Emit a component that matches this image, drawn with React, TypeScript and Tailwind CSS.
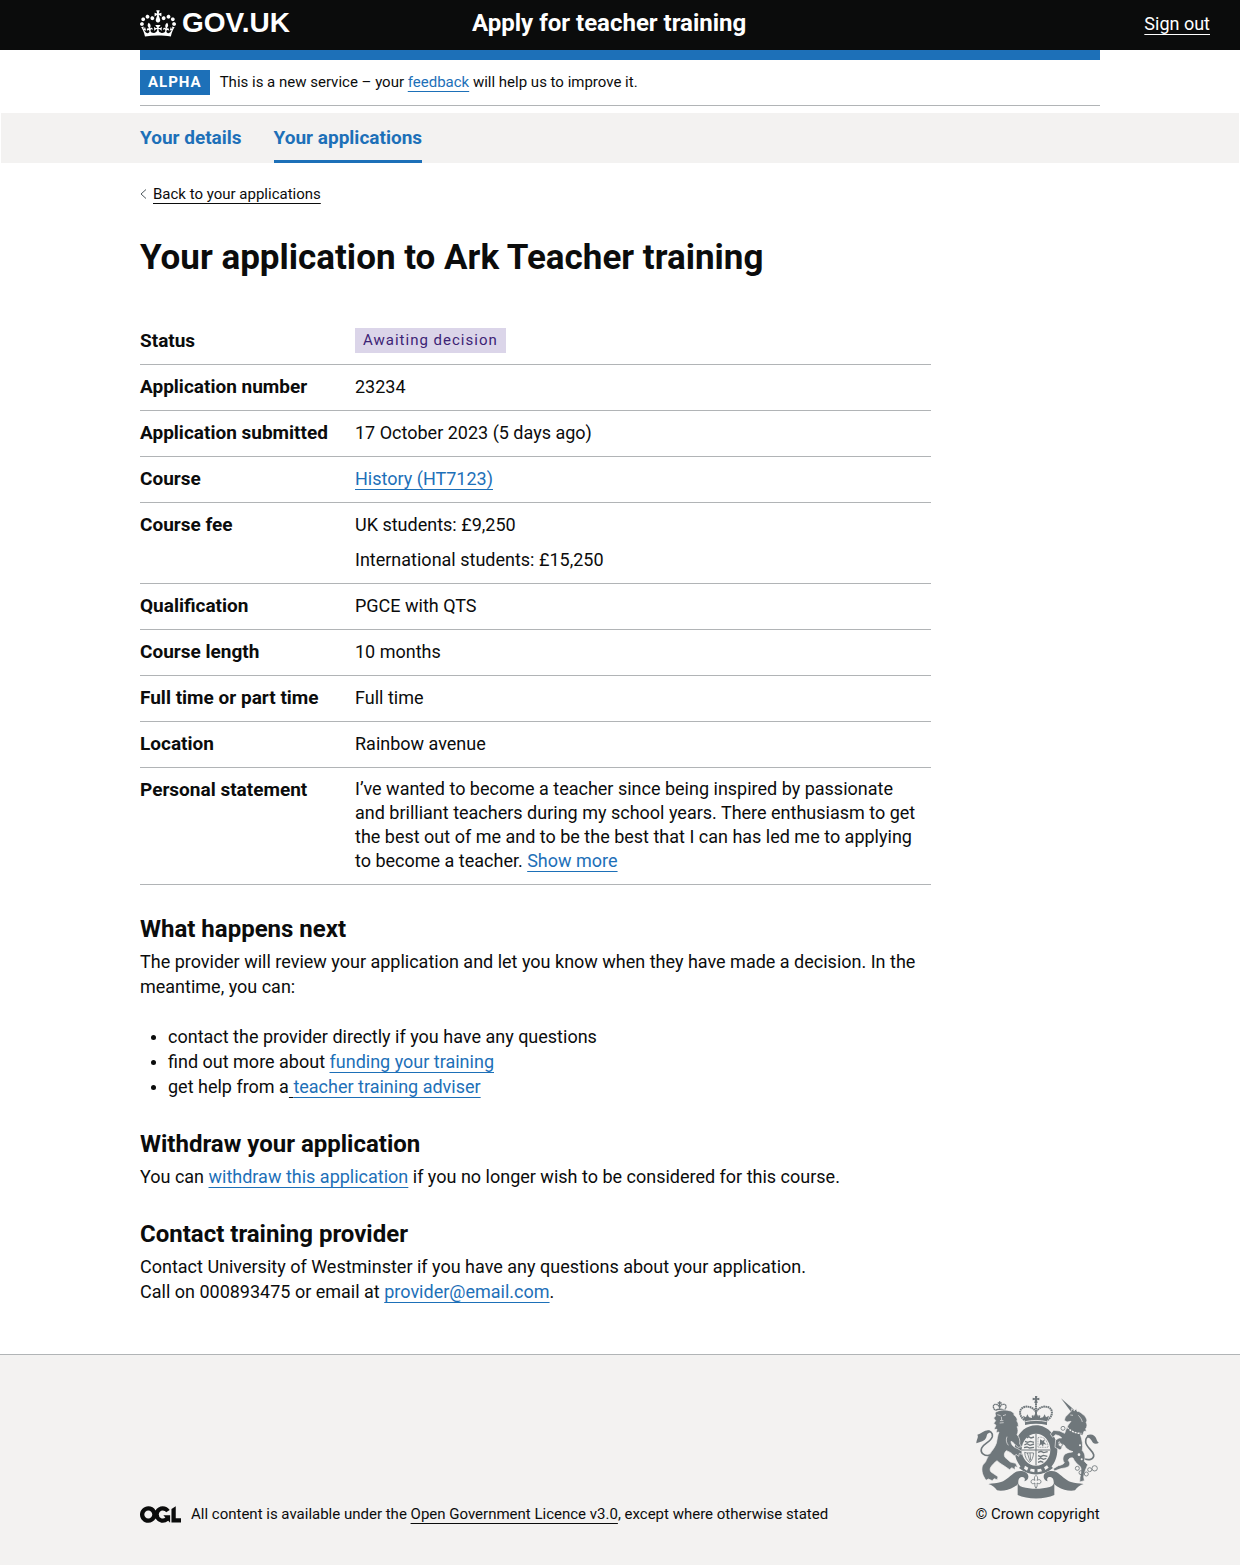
import type { ReactNode } from 'react';

function Crown() {
  return (
    <svg viewBox="0 0 132 97" className="h-[27px] w-9 shrink-0" fill="currentColor" fillRule="evenodd" aria-hidden="true">
      <path d="M25 30.2c3.5 1.5 7.7-.2 9.1-3.7 1.5-3.6-.2-7.8-3.9-9.2-3.6-1.4-7.6.3-9.1 3.9-1.4 3.5.3 7.5 3.9 9zM9 39.5c3.6 1.5 7.8-.2 9.2-3.7 1.5-3.6-.2-7.8-3.9-9.1-3.6-1.5-7.6.2-9.1 3.8-1.4 3.5.3 7.5 3.8 9zM4.4 57.2c3.5 1.5 7.7-.2 9.1-3.8 1.5-3.6-.2-7.7-3.9-9.1-3.5-1.5-7.6.3-9.1 3.8-1.4 3.5.3 7.6 3.9 9.1zm38.3-21.4c3.5 1.5 7.7-.2 9.1-3.8 1.5-3.6-.2-7.7-3.9-9.1-3.6-1.5-7.6.3-9.1 3.8-1.3 3.6.4 7.7 3.9 9.1zm64.4-5.6c-3.6 1.5-7.8-.2-9.1-3.7-1.5-3.6.2-7.8 3.8-9.2 3.6-1.4 7.7.3 9.2 3.9 1.3 3.5-.4 7.5-3.9 9zm15.9 9.3c-3.6 1.5-7.7-.2-9.1-3.7-1.5-3.6.2-7.8 3.7-9.1 3.6-1.5 7.7.2 9.2 3.8 1.5 3.5-.3 7.5-3.8 9zm4.7 17.7c-3.6 1.5-7.8-.2-9.2-3.8-1.5-3.6.2-7.7 3.9-9.1 3.6-1.5 7.7.3 9.2 3.8 1.3 3.5-.4 7.6-3.9 9.1zM89.3 35.8c-3.6 1.5-7.8-.2-9.2-3.8-1.4-3.6.2-7.7 3.9-9.1 3.6-1.5 7.7.3 9.2 3.8 1.4 3.6-.3 7.7-3.9 9.1zM69.7 17.7l8.9 4.7V9.3l-8.9 2.8c-.2-.3-.5-.6-.9-.9L72.4 0H59.6l3.5 11.2c-.3.3-.6.5-.9.9l-8.8-2.8v13.1l8.8-4.7c.3.3.6.7.9.9l-5 15.4v.1c-.2.8-.4 1.6-.4 2.4 0 4.1 3.1 7.5 7 8.1h.2c.3 0 .7.1 1 .1.4 0 .7 0 1-.1h.2c4-.6 7.1-4.1 7.1-8.1 0-.8-.1-1.7-.4-2.4V34l-5.1-15.4c.4-.2.7-.6 1-.9zM66 92.8c16.9 0 32.8 1.1 47.1 3.2 4-16.9 8.9-26.7 14-33.5l-9.6-3.4c1 4.9 1.1 7.2 0 10.2-1.5-1.4-3-4.3-4.2-8.7L108.6 76c2.8-2 5-3.2 7.5-3.3-4.4 9.4-10 11.9-13.6 11.2-4.3-.8-6.3-4.6-5.6-7.9 1-4.7 5.7-5.9 8-.5 4.3-8.7-3-11.4-7.6-8.8 7.1-7.2 7.9-13.5 2.1-21.1-8 6.1-8.1 12.3-4.5 20.8-4.7-5.4-12.1-2.5-9.5 6.2 3.4-5.2 7.9-2 7.2 3.1-.6 4.3-6.4 7.8-13.5 7.2-10.3-.9-10.9-8-11.2-13.8 2.5-.5 7.1 1.8 11 7.3L80.2 60c-4.1 4.4-8 5.3-12.3 5.4 1.4-4.4 8-11.6 8-11.6H55.5s6.4 7.2 7.9 11.6c-4.2-.1-8-1-12.3-5.4l1.4 16.4c3.9-5.5 8.5-7.7 10.9-7.3-.3 5.8-.9 12.8-11.1 13.8-7.2.6-12.9-2.9-13.5-7.2-.7-5 3.8-8.3 7.1-3.1 2.7-8.7-4.6-11.6-9.4-6.2 3.7-8.5 3.6-14.7-4.6-20.8-5.8 7.6-5 13.9 2.2 21.1-4.7-2.6-11.9.1-7.7 8.8 2.3-5.5 7.1-4.2 8.1.5.7 3.3-1.3 7.1-5.7 7.9-3.5.7-9-1.8-13.5-11.2 2.5.1 4.7 1.3 7.5 3.3l-4.7-15.4c-1.2 4.4-2.7 7.2-4.3 8.7-1.1-3-.9-5.3 0-10.2l-9.5 3.4c5 6.9 9.9 16.7 14 33.5 14.8-2.1 30.8-3.2 47.7-3.2z" />
    </svg>
  );
}

function OglLogo() {
  return (
    <svg viewBox="0 0 483.2 195.7" className="h-[17px] w-[41px] shrink-0" fill="currentColor" role="img" aria-label="Open Government Licence">
      <path d="M421.5 142.8V.1l-50.7 32.3v161.1h112.4v-50.7zm-122.3-9.6A47.12 47.12 0 0 1 221 97.8c0-26 21.1-47.1 47.1-47.1 16.7 0 31.4 8.7 39.7 21.8l42.7-27.2A97.63 97.63 0 0 0 268.1 0c-36.5 0-68.3 20.1-85.1 49.7A98 98 0 0 0 97.8 0C43.9 0 0 43.9 0 97.8s43.9 97.8 97.8 97.8c36.5 0 68.3-20.1 85.1-49.7a97.76 97.76 0 0 0 149.6 25.4l19.4 22.2h3v-87.8h-80l24.3 27.5zM97.8 145c-26 0-47.1-21.1-47.1-47.1s21.1-47.1 47.1-47.1 47.1 21.1 47.1 47.1S123.8 145 97.8 145" />
    </svg>
  );
}

function RibbonTail() {
  return (
    <path d="M70 300c14-2 26-2 38-6 18-6 28-20 44-30 14-6 36-2 38 12 1 9-5 14-12 16 4-8 0-14-8-13-8 1-10 9-10 15 0 8-6 10-12 14-16 10-36 14-52 11-6-8-14-16-26-19z" />
  );
}

function RoyalArms() {
  const ink = '#6f777b';
  const paper = '#f3f2f1';
  return (
    <svg viewBox="30 33 375 312" className="h-[104px] w-[125px]" fill={ink} aria-hidden="true">
      {/* central crown */}
      <path d="M210 36h7l-1 7 7-2v8l-7-2 2 10h-10l2-10-7 2v-8l7 2z" />
      <g fill="none" stroke={ink} strokeWidth="6" strokeDasharray="5 1.5">
        <path d="M178 108C160 94 162 74 178 69C192 65 206 72 213 84C220 72 234 65 248 69C264 74 266 94 248 108" />
        <path d="M213 58v34" />
      </g>
      <path d="M179 110l-5-15 9 5 4-9 5 9 9 2-1-7 5-2 1 5 7-14 7 14 1-5 5 2-1 7 9-2 5-9 4 9 9-5-5 15-1 7v6c-22-5-44-5-66 0v-6z" />
      <path d="M181 113c20-5 44-5 64 0" stroke={paper} strokeWidth="2.5" fill="none" />
      {/* garter and shield */}
      <path fillRule="evenodd" d="M213 124c36 0 64 32 64 73s-28 73-64 73-64-32-64-73 28-73 64-73zm0 25c-24 0-43 22-43 48s19 48 43 48 43-22 43-48-19-48-43-48z" />
      <path d="M213 150v94M171 198h84" stroke={ink} strokeWidth="3" />
      <path d="M186 162l5-4 7 4 9-3M180 172l8 3 8-3 11 3M178 183l8-4 9 5 12-4M177 191l9-2 8 3 13-2M219 205l9-3 8 4 12-3M219 215l8 3 8-4 12 3M219 226l8-4 8 4 9-3M219 235l8-3 8 3" stroke={ink} strokeWidth="4" fill="none" />
      <path d="M179 205c8 4 17 0 27 2-2 12-4 22-12 28-8-6-14-14-15-30zM187 207l8 25M195 207l2 22" stroke={ink} strokeWidth="2.5" fill="none" />
      <path d="M219 161c10-4 18 0 24 8 4 6 6 13 6 21h-30z" stroke={ink} strokeWidth="2" fill="none" strokeDasharray="3 2" />
      <path d="M225 166l8 4 7-4-3 8 8 8-9-2-2 8-5-7-7 5 3-9z" />
      <path d="M170 244c26 20 60 20 86 0l8 8c-30 26-72 26-102 0z" />
      <path d="M180 245l10 6-4 9-9-6zM197 254l12 2-1 9-13-3zM217 256l11-2 3 8-13 3zM237 250l9-6 5 7-10 7z" fill={paper} />
      {/* lion */}
      <g fill="none" stroke={ink} strokeWidth="4">
        <path d="M90 78c-8-8-6-18 2-17 6 0 10 4 12 10 2-6 6-10 12-10 8-1 10 9 2 17" strokeDasharray="5 1" />
        <path d="M104 52v18M98 57h12M91 79c8-4 18-4 27 0" />
      </g>
      <path
        d="M90 86C100 78 120 76 132 80C138 80 144 84 148 90L146 92C152 96 156 102 157 108L155 110C160 116 160 122 160 128L156 128C160 136 160 144 156 152C162 158 166 168 164 180L170 188L160 190C150 184 146 174 138 172C138 182 146 190 158 194L171 202L170 211L163 208L161 217L153 211L148 216C140 206 130 202 124 200C118 206 116 212 120 220L136 234L152 238L158 250L150 248L150 257L140 251L134 257L118 246C108 240 100 234 96 230C88 236 80 244 76 252C74 258 76 264 84 268L99 278L97 287L87 284L82 290L70 285L63 289C54 276 48 262 52 246C56 238 62 236 64 228C72 208 88 196 94 178C97 164 97 156 102 144L93 146L96 136L87 136L93 124L86 118L92 110L86 102L92 96Z"
        stroke={paper}
        strokeWidth="2"
      />
      <path d="M97 92l10 3M114 95l9-3M109 98l1 9-4 3h9M104 117l12-1M126 158c-4 10-2 18 4 26" stroke={paper} strokeWidth="2" fill="none" />
      <path d="M76 213C60 218 44 208 50 192C56 178 78 174 82 158C84 146 76 140 66 143" stroke={ink} strokeWidth="5" fill="none" />
      <path d="M74 139C56 138 48 150 37 152C42 160 34 166 34 178C46 174 60 172 64 160C66 152 66 148 74 146z" />
      {/* unicorn */}
      <path d="M288 43L328 78l-9 7z" />
      <path d="M354 222C370 232 388 226 386 212C382 198 364 190 362 174C361 162 368 154 378 156" stroke={ink} strokeWidth="5" fill="none" />
      <path d="M366 154c14-6 24 0 28 10 2 6 4 10 8 12-6 4-14 4-18 0-6-6-4-12-18-16z" />
      <path
        d="M318 82L320 74L328 80L334 74L336 82C342 82 348 86 352 90C360 94 366 104 366 112L363 114C368 122 366 130 362 134L364 142L357 142L353 154L346 152C352 168 354 184 352 200C361 208 361 222 358 232L368 242C364 252 358 264 356 278L358 290L344 294L345 280C348 266 350 254 346 248C338 242 328 232 324 222C316 220 310 224 310 230C316 236 316 244 308 249C298 254 288 252 282 256L268 261L265 254L280 245C290 243 296 240 298 236C292 228 292 216 302 209C310 204 318 206 324 203C310 200 302 192 298 184C290 180 286 176 282 173L280 184L292 191L285 198L270 190L272 168L282 162L290 162L284 156L272 152L263 160L256 150L266 139L284 141L299 148C303 136 306 126 318 112L306 114L298 109L301 99Z"
        stroke={paper}
        strokeWidth="2"
      />
      <path d="M307 130c10 12 24 18 42 18" stroke={paper} strokeWidth="4" fill="none" strokeDasharray="6 3" />
      <path d="M316 93l8 1M340 94c6 6 10 12 12 20" stroke={paper} strokeWidth="2" fill="none" />
      <g fill="none" stroke={ink} strokeWidth="2.5">
        <circle cx="294" cy="133" r="6" />
        <circle cx="286" cy="182" r="6" />
        <circle cx="337" cy="253" r="6" />
        <circle cx="348" cy="266" r="6" />
        <circle cx="364" cy="270" r="6" />
        <circle cx="374" cy="257" r="6" />
        <circle cx="389" cy="253" r="8" />
      </g>
      <g fill={paper}>
        <circle cx="345" cy="184" r="3" />
        <circle cx="342" cy="212" r="4" />
        <circle cx="350" cy="226" r="3" />
      </g>
      {/* ribbon and thistle */}
      <RibbonTail />
      <g transform="matrix(-1 0 0 1 426 0)">
        <RibbonTail />
      </g>
      <path d="M158 290C158 300 164 307 172 309C198 316 228 316 254 309C262 307 268 300 268 290L268 333C240 347 186 347 158 333Z" />
      <path d="M213 274c6 5 6 10 3 15 6-4 12-2 12 4s-6 8-12 4c1 6 1 10-3 16-4-6-4-10-3-16-6 4-12 2-12-4s6-8 12-4c-3-5-3-10 3-15z" fill={paper} stroke={ink} strokeWidth="2.5" />
    </svg>
  );
}

function Link({ children }: { children: ReactNode }) {
  return (
    <a href="#" className="text-[#1d70b8] underline decoration-1 underline-offset-4">
      {children}
    </a>
  );
}

const rows: { term: string; value: ReactNode }[] = [
  {
    term: 'Status',
    value: (
      <strong className="block w-fit bg-[#dbd5e9] px-2 text-[15px] font-normal tracking-[1px] text-[#3d2375]">
        Awaiting decision
      </strong>
    ),
  },
  { term: 'Application number', value: '23234' },
  { term: 'Application submitted', value: '17 October 2023 (5 days ago)' },
  { term: 'Course', value: <Link>History (HT7123)</Link> },
  {
    term: 'Course fee',
    value: (
      <>
        <p>UK students: £9,250</p>
        <p className="mt-[10px]">International students: £15,250</p>
      </>
    ),
  },
  { term: 'Qualification', value: 'PGCE with QTS' },
  { term: 'Course length', value: '10 months' },
  { term: 'Full time or part time', value: 'Full time' },
  { term: 'Location', value: 'Rainbow avenue' },
  {
    term: 'Personal statement',
    value: (
      <p className="leading-6">
        I’ve wanted to become a teacher since being inspired by passionate and brilliant teachers during my school
        years. There enthusiasm to get the best out of me and to be the best that I can has led me to applying to
        become a teacher. <Link>Show more</Link>
      </p>
    ),
  },
];

function Section({ title, children }: { title: string; children: ReactNode }) {
  return (
    <section className="mb-[30px]">
      <h2 className="mb-[5px] text-2xl leading-[30px] font-bold">{title}</h2>
      {children}
    </section>
  );
}

export default function App() {
  return (
    <div className="bg-white font-['Roboto',sans-serif] text-lg leading-[25px] text-[#0b0c0c]">
      <header className="grid grid-cols-[1fr_minmax(0,960px)_1fr] bg-[#0b0c0c] text-white">
        <div className="col-start-2 flex h-[50px] items-center pb-1">
          <a href="#" className="flex w-1/3 items-center gap-[6px]">
            <Crown />
            <span className="font-['Liberation_Sans',sans-serif] text-[28px] leading-[30px] font-bold">GOV.UK</span>
          </a>
          <a href="#" className="pl-3 text-2xl leading-[30px] font-bold">
            Apply for teacher training
          </a>
        </div>
        <div className="flex items-center justify-end pr-[30px] pb-1">
          <a href="#" className="whitespace-nowrap underline decoration-1 underline-offset-4">
            Sign out
          </a>
        </div>
      </header>

      <div className="mx-auto max-w-[960px] border-t-10 border-[#1d70b8]">
        <div className="flex items-center gap-[10px] border-b border-[#b1b4b6] py-[10px] text-[15px]">
          <strong className="bg-[#1d70b8] px-2 tracking-[1px] text-white">ALPHA</strong>
          <p>
            This is a new service – your <Link>feedback</Link> will help us to improve it.
          </p>
        </div>
      </div>

      <nav aria-label="Account" className="mx-px mt-[7px] bg-[#f3f2f1]">
        <div className="mx-auto flex max-w-[960px] gap-8 text-[19px] font-bold text-[#1d70b8]">
          <a href="#" className="pt-3 pb-[13px]">
            Your details
          </a>
          <a href="#" aria-current="page" className="border-b-3 border-[#1d70b8] pt-3 pb-[10px]">
            Your applications
          </a>
        </div>
      </nav>

      <main className="mx-auto max-w-[960px] pb-5">
        <a href="#" className="mt-[21px] inline-flex items-center gap-[5px] text-[15px] leading-5">
          <svg viewBox="0 0 8 12" className="h-3 w-2" fill="none" stroke="#505a5f" aria-hidden="true">
            <path d="M6 1.5L1 6l5 4.5" />
          </svg>
          <span className="underline decoration-1 underline-offset-4">Back to your applications</span>
        </a>

        <div className="max-w-[791px]">
          <h1 className="mt-8 mb-[41px] text-[35px] leading-10 font-bold">Your application to Ark Teacher training</h1>

          <dl className="mb-[29px]">
            {rows.map((row) => (
              <div key={row.term} className="grid grid-cols-[215px_1fr] border-b border-[#b1b4b6] pt-[9px] pb-[11px]">
                <dt className="text-[19px] font-bold">{row.term}</dt>
                <dd className="pr-2">{row.value}</dd>
              </div>
            ))}
          </dl>

          <Section title="What happens next">
            <p>
              The provider will review your application and let you know when they have made a decision. In the
              meantime, you can:
            </p>
            <ul className="mt-[25px] list-disc pl-7 marker:text-base">
              <li>contact the provider directly if you have any questions</li>
              <li>
                find out more about <Link>funding your training</Link>
              </li>
              <li>
                get help from a
                <span className="underline decoration-1 underline-offset-4"> </span>
                <Link>teacher training adviser</Link>
              </li>
            </ul>
          </Section>

          <Section title="Withdraw your application">
            <p>
              You can <Link>withdraw this application</Link> if you no longer wish to be considered for this course.
            </p>
          </Section>

          <Section title="Contact training provider">
            <p>
              Contact University of Westminster if you have any questions about your application.
              <br />
              Call on 000893475 or email at <Link>provider@email.com</Link>.
            </p>
          </Section>
        </div>
      </main>

      <footer className="border-t border-[#b1b4b6] bg-[#f3f2f1] pt-10 pb-[41px]">
        <div className="mx-auto flex max-w-[960px] items-end justify-between text-[15px] leading-5">
          <div className="flex items-center gap-[10px]">
            <OglLogo />
            <p>
              All content is available under the{' '}
              <a href="#" className="underline decoration-1 underline-offset-4">
                Open Government Licence v3.0
              </a>
              , except where otherwise stated
            </p>
          </div>
          <a href="#" className="flex flex-col items-center gap-[5px]">
            <RoyalArms />
            © Crown copyright
          </a>
        </div>
      </footer>
    </div>
  );
}
